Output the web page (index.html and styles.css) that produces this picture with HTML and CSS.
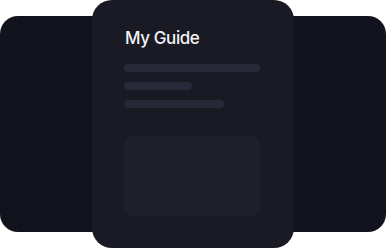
FILE: index.html
```html
<!DOCTYPE html>
<html>
<head>
<meta charset="utf-8">
<link rel="stylesheet" href="styles.css">
</head>
<body>
<div class="stage">
  <div class="back-card"></div>
  <div class="guide-card">
    <div class="title">My Guide</div>
    <div class="lines">
      <div class="line line-long"></div>
      <div class="line line-short"></div>
      <div class="line line-mid"></div>
    </div>
    <div class="panel"></div>
  </div>
</div>
</body>
</html>
```
FILE: styles.css
```css
html, body {
  margin: 0;
  padding: 0;
  background: #ffffff;
}
.stage {
  width: 386px;
  height: 248px;
  display: grid;
}
.back-card {
  grid-area: 1 / 1;
  align-self: center;
  height: 216px;
  width: 386px;
  border-radius: 18px;
  background: #13131d;
}
.guide-card {
  grid-area: 1 / 1;
  justify-self: center;
  width: 202px;
  height: 248px;
  box-sizing: border-box;
  padding: 26px 34px 0 32px;
  border-radius: 20px;
  background: #1a1a25;
  display: flex;
  flex-direction: column;
}
.title {
  font-family: Inter, "Open Sans", sans-serif;
  font-size: 17px;
  line-height: 24px;
  font-weight: 500;
  color: #f2f2f7;
  letter-spacing: -0.4px;
  padding-left: 1px;
}
.lines {
  margin-top: 14px;
  display: flex;
  flex-direction: column;
  gap: 10px;
}
.line {
  height: 8px;
  border-radius: 4px;
  background: #282838;
}
.line-long { width: 136px; }
.line-short { width: 68px; }
.line-mid { width: 100px; }
.panel {
  margin-top: 28px;
  width: 136px;
  height: 80px;
  border-radius: 10px;
  background: #1f1f2b;
}
```
